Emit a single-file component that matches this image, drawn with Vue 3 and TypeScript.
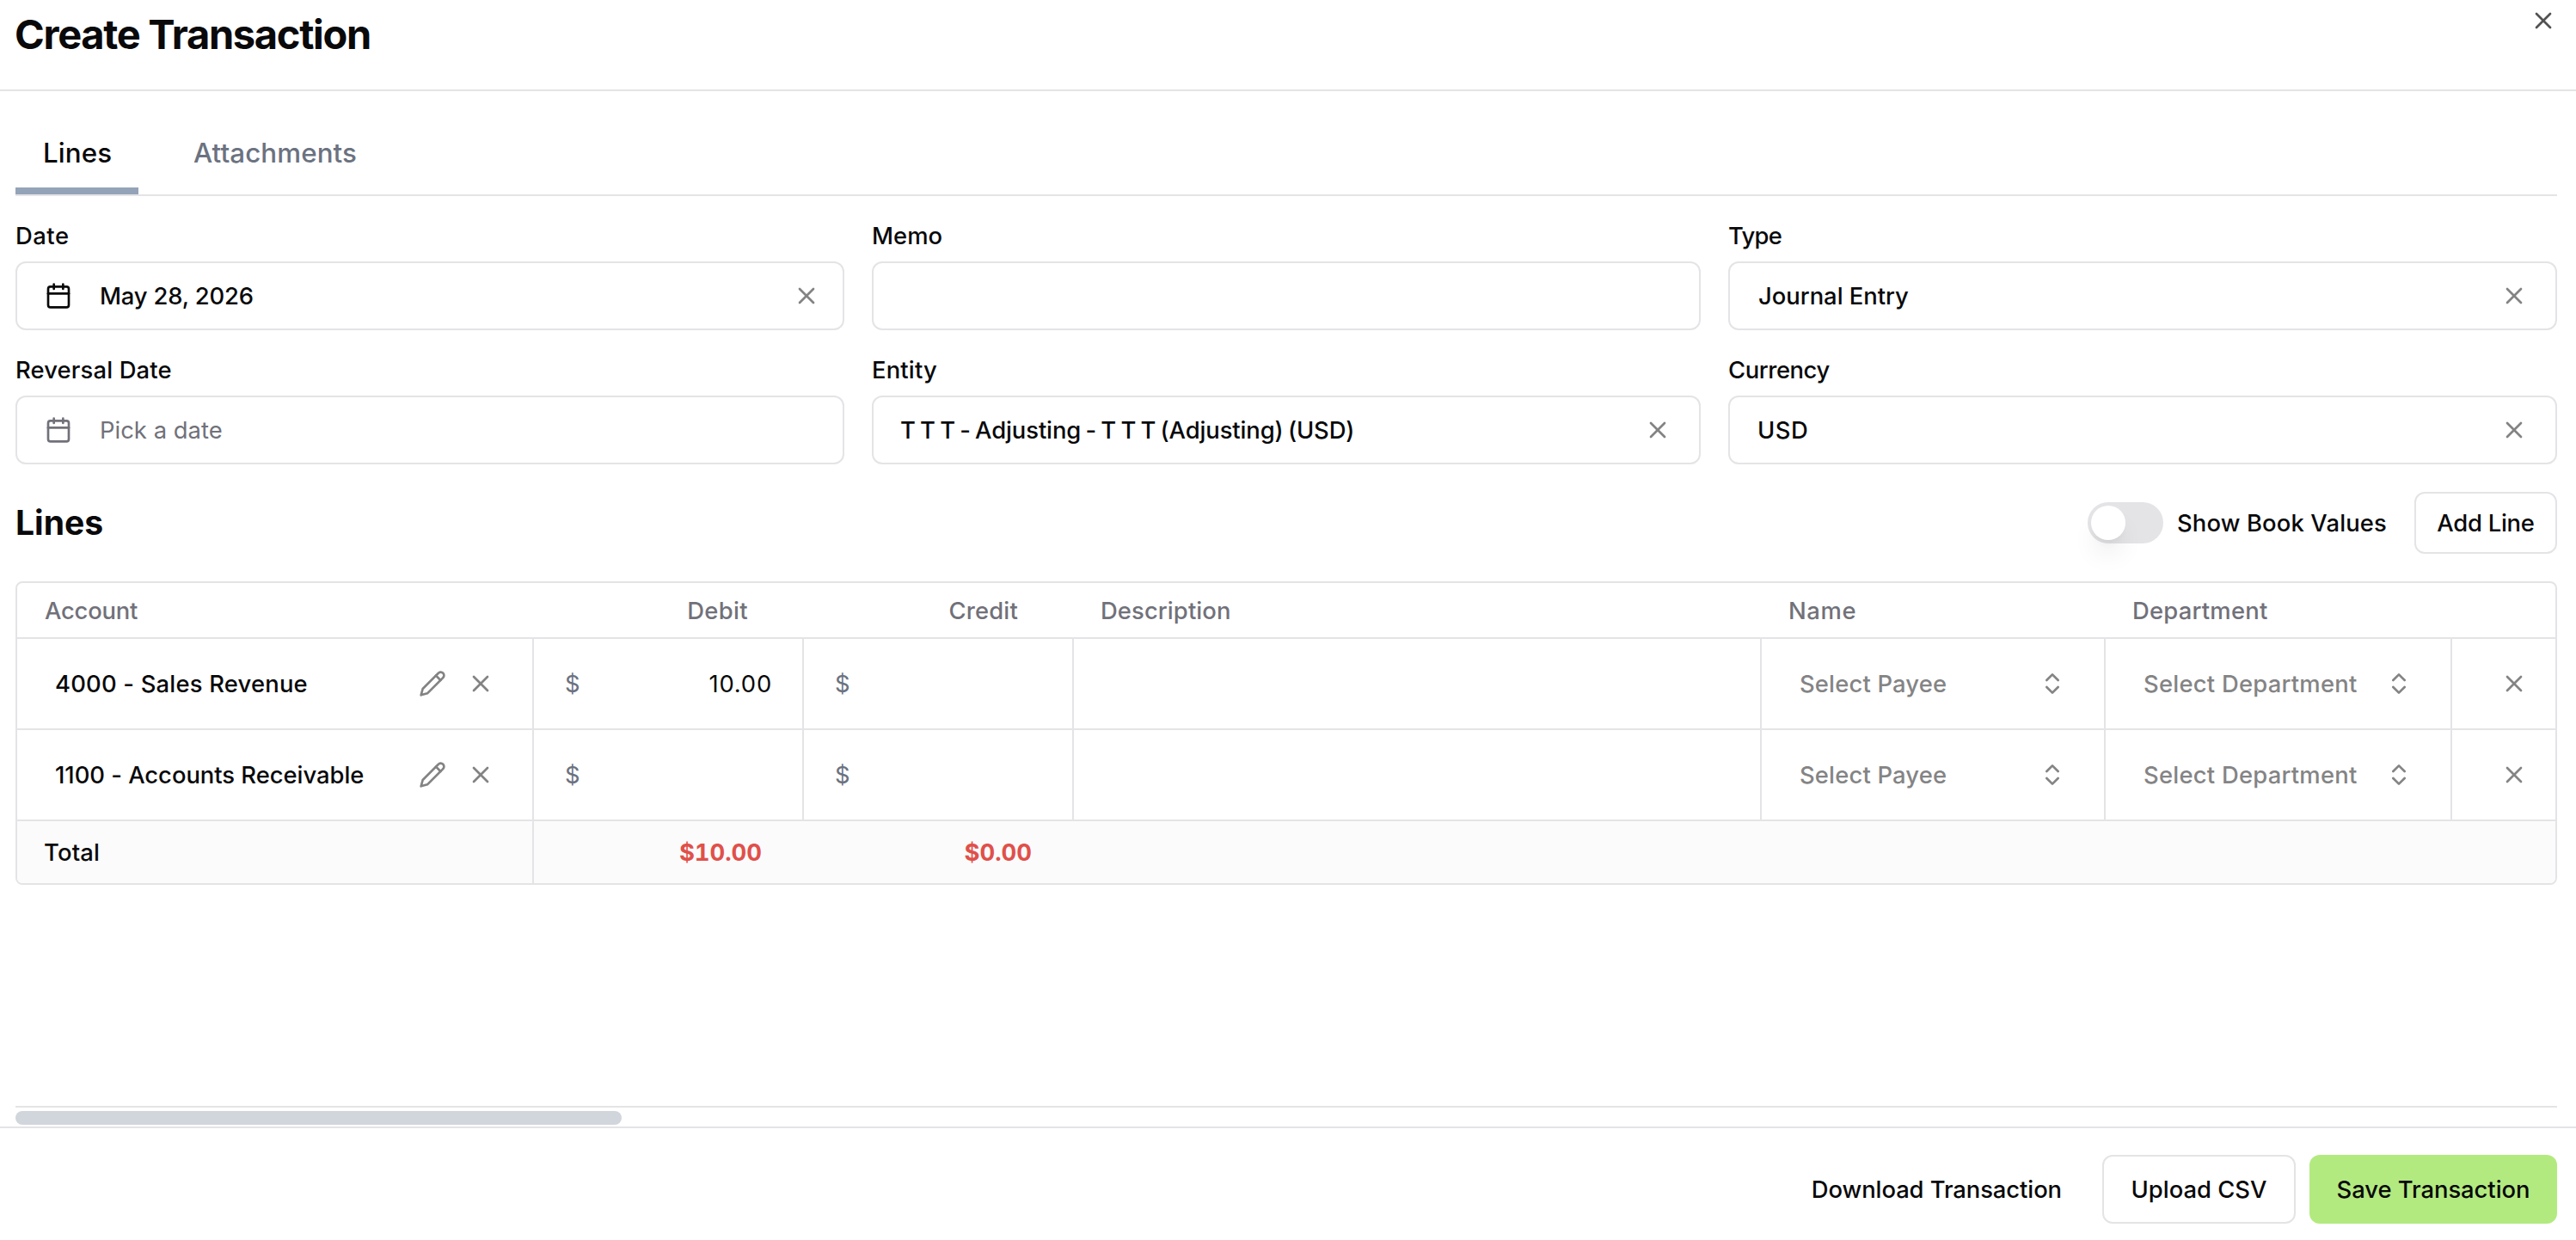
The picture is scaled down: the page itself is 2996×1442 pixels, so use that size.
<script setup lang="ts">
type IconName = 'x' | 'calendar' | 'pencil' | 'chevrons'

interface Field {
  label: string
  labelSpacing: number
  value: string
  spacing: number
  wordSpacing?: number
  placeholder?: boolean
  kind: 'date' | 'text' | 'combo'
  inset?: number
}

interface Line {
  account: string
  spacing: number
  debit: string
  credit: string
}

const icons: Record<IconName, string[]> = {
  x: ['M18 6 6 18', 'm6 6 12 12'],
  calendar: ['M8 2v4', 'M16 2v4', 'M5 4h14a2 2 0 0 1 2 2v14a2 2 0 0 1-2 2H5a2 2 0 0 1-2-2V6a2 2 0 0 1 2-2Z', 'M3 10h18'],
  pencil: ['M17 3a2.85 2.83 0 1 1 4 4L7.5 20.5 2 22l1.5-5.5Z', 'm15 5 4 4'],
  chevrons: ['m7 15 5 5 5-5', 'm7 9 5-5 5 5'],
}

const fields: Field[] = [
  { label: 'Date', labelSpacing: 0.5, value: 'May 28, 2026', spacing: -0.16, kind: 'date' },
  { label: 'Memo', labelSpacing: 0.06, value: '', spacing: 0, kind: 'text' },
  { label: 'Type', labelSpacing: -0.7, value: 'Journal Entry', spacing: -0.02, kind: 'combo', inset: 33 },
  { label: 'Reversal Date', labelSpacing: 0.15, value: 'Pick a date', spacing: 0.03, placeholder: true, kind: 'date' },
  { label: 'Entity', labelSpacing: 0.18, value: 'T T T - Adjusting - T T T (Adjusting) (USD)', spacing: -0.1, wordSpacing: -1.9, kind: 'combo', inset: 31 },
  { label: 'Currency', labelSpacing: -0.42, value: 'USD', spacing: 0.5, kind: 'combo', inset: 32 },
]

const columns = [
  { title: 'Account', spacing: -0.2, numeric: false },
  { title: 'Debit', spacing: 0.35, numeric: true },
  { title: 'Credit', spacing: 0.2, numeric: true },
  { title: 'Description', spacing: 0.1, numeric: false },
  { title: 'Name', spacing: 0.6, numeric: false },
  { title: 'Department', spacing: 0.23, numeric: false },
  { title: '', spacing: 0, numeric: false },
]

const lines: Line[] = [
  { account: '4000 - Sales Revenue', spacing: 0.2, debit: '10.00', credit: '' },
  { account: '1100 - Accounts Receivable', spacing: -0.03, debit: '', credit: '' },
]

const ls = (letter: number, word = 0) => ({ letterSpacing: `${letter}px`, wordSpacing: `${word}px` })
</script>

<template>
  <div class="dialog">
    <header class="head">
      <h1>Create Transaction</h1>
      <svg class="icon close" viewBox="0 0 24 24"><path v-for="d in icons.x" :key="d" :d="d" /></svg>
    </header>

    <main class="body">
      <nav class="tabs">
        <span class="tab active">Lines</span>
        <span class="tab">Attachments</span>
      </nav>

      <section class="form">
        <div v-for="f in fields" :key="f.label" class="field">
          <label :style="ls(f.labelSpacing)">{{ f.label }}</label>
          <div class="control" :class="[f.kind, { placeholder: f.placeholder }]">
            <svg v-if="f.kind === 'date'" class="icon" viewBox="0 0 24 24">
              <path v-for="d in icons.calendar" :key="d" :d="d" />
            </svg>
            <span class="value" :style="{ ...ls(f.spacing, f.wordSpacing), marginLeft: `${f.inset ?? 0}px` }">{{ f.value }}</span>
            <svg v-if="f.value && !f.placeholder" class="icon dim" viewBox="0 0 24 24">
              <path v-for="d in icons.x" :key="d" :d="d" />
            </svg>
          </div>
        </div>
      </section>

      <section class="bar">
        <h2>Lines</h2>
        <span class="switch"><span class="knob"></span></span>
        <span class="switch-label">Show Book Values</span>
        <button class="btn add">Add Line</button>
      </section>

      <section class="table">
        <div class="row header">
          <div v-for="(c, i) in columns" :key="i" class="cell" :class="{ num: c.numeric, first: i === 0 }">
            <span :style="ls(c.spacing)">{{ c.title }}</span>
          </div>
        </div>
        <div v-for="l in lines" :key="l.account" class="row line">
          <div class="cell account">
            <span class="name" :style="ls(l.spacing)">{{ l.account }}</span>
            <svg class="icon dim" viewBox="0 0 24 24"><path v-for="d in icons.pencil" :key="d" :d="d" /></svg>
            <svg class="icon dim" viewBox="0 0 24 24"><path v-for="d in icons.x" :key="d" :d="d" /></svg>
          </div>
          <div class="cell money"><span class="sign">$</span><span class="amount">{{ l.debit }}</span></div>
          <div class="cell money"><span class="sign">$</span><span class="amount">{{ l.credit }}</span></div>
          <div class="cell"></div>
          <div class="cell select">
            <span class="payee">Select Payee</span>
            <svg class="icon" viewBox="0 0 24 24"><path v-for="d in icons.chevrons" :key="d" :d="d" /></svg>
          </div>
          <div class="cell select">
            <span class="dept">Select Department</span>
            <svg class="icon" viewBox="0 0 24 24"><path v-for="d in icons.chevrons" :key="d" :d="d" /></svg>
          </div>
          <div class="cell remove">
            <svg class="icon" viewBox="0 0 24 24"><path v-for="d in icons.x" :key="d" :d="d" /></svg>
          </div>
        </div>
        <div class="row total">
          <div class="cell label">Total</div>
          <div class="cell sum">$10.00</div>
          <div class="cell sum">$0.00</div>
        </div>
      </section>

      <div class="scroller"><div class="thumb"></div></div>
    </main>

    <footer class="foot">
      <span class="download">Download Transaction</span>
      <button class="btn upload">Upload CSV</button>
      <button class="btn save">Save Transaction</button>
    </footer>
  </div>
</template>

<style>
body {
  background: #fff;
}
</style>

<style scoped>
.dialog,
.dialog * {
  box-sizing: border-box;
}
.dialog {
  width: 2996px;
  height: 1442px;
  overflow: hidden;
  display: flex;
  flex-direction: column;
  background: #fff;
  color: #09090b;
  font-family: Inter, 'Liberation Sans', sans-serif;
  font-size: 27.4px;
  font-weight: 500;
  line-height: 40px;
  white-space: nowrap;
}
.icon {
  width: 32px;
  height: 32px;
  flex: none;
  display: block;
  fill: none;
  stroke: currentColor;
  stroke-width: 2;
  stroke-linecap: round;
  stroke-linejoin: round;
}
.dim {
  opacity: 0.5;
}
.head {
  flex: none;
  height: 106px;
  display: flex;
  justify-content: space-between;
  align-items: flex-start;
  padding: 8px 22px 0 17px;
  border-bottom: 2px solid #e4e4e7;
}
h1 {
  margin: 0;
  font-size: 47px;
  font-weight: 650;
  line-height: 64px;
  letter-spacing: -1.3px;
}
.close {
  opacity: 0.7;
}
.body {
  flex: 1;
  min-height: 0;
  display: flex;
  flex-direction: column;
  padding: 0 22px 0 18px;
}
.tabs {
  flex: none;
  height: 122px;
  display: flex;
  align-items: flex-end;
  gap: 32px;
  border-bottom: 2px solid #e4e4e7;
  font-size: 31.3px;
}
.tab {
  height: 89px;
  padding: 1px 31px 0 32px;
  border-bottom: 8px solid transparent;
  line-height: 81px;
  letter-spacing: 0.09px;
  color: #6b7280;
}
.tab.active {
  width: 143px;
  padding: 1px 0 0 32px;
  border-bottom-color: #94a3b8;
  letter-spacing: 0.1px;
  color: #09090b;
}
.form {
  display: grid;
  grid-template-columns: repeat(3, 1fr);
  gap: 26px 32px;
  margin-top: 26px;
}
.field {
  display: flex;
  flex-direction: column;
  gap: 10px;
}
label {
  height: 40px;
}
.control {
  height: 80px;
  display: flex;
  align-items: center;
  border: 2px solid #e4e4e7;
  border-radius: 12px;
}
.control.date {
  padding: 0 26px 0 32px;
  gap: 32px;
}
.control.combo {
  padding-right: 32px;
}
.value {
  flex: 1;
}
.placeholder {
  color: #71717a;
  font-weight: 400;
}
.bar {
  display: flex;
  align-items: center;
  height: 72px;
  margin-top: 32px;
}
h2 {
  flex: 1;
  margin: 0;
  font-size: 39.1px;
  font-weight: 650;
  letter-spacing: 0;
}
.switch {
  width: 88px;
  height: 48px;
  padding: 4px;
  border-radius: 24px;
  background: #e4e4e7;
}
.knob {
  display: block;
  width: 40px;
  height: 40px;
  border-radius: 50%;
  background: #fff;
  box-shadow: 0 20px 30px -6px rgba(0, 0, 0, 0.1), 0 8px 12px -8px rgba(0, 0, 0, 0.1);
}
.switch-label {
  width: 244px;
  margin: 0 32px 0 16px;
  letter-spacing: 0.14px;
}
.btn {
  display: flex;
  align-items: center;
  justify-content: center;
  padding: 0;
  border: 2px solid #e4e4e7;
  border-radius: 12px;
  background: #fff;
  color: #09090b;
  font: inherit;
}
.add {
  width: 166px;
  height: 72px;
  letter-spacing: -0.25px;
}
.table {
  margin-top: 32px;
  border: 2px solid #e4e4e7;
  border-radius: 8px;
  overflow: hidden;
}
.row {
  display: grid;
  grid-template-columns: 601px 314px 314px 800px 400px 403px 1fr;
}
.cell {
  display: flex;
  align-items: center;
  min-width: 0;
}
.header {
  height: 65px;
  border-bottom: 2px solid #e4e4e7;
  color: #71717a;
}
.header .cell {
  padding-left: 31px;
}
.header .first {
  padding-left: 32px;
}
.header .num {
  justify-content: flex-end;
  padding: 0 65px 0 0;
}
.line {
  height: 106px;
  border-bottom: 2px solid #e4e4e7;
}
.line .cell {
  border-right: 2px solid #e4e4e7;
}
.line .cell:last-child {
  border-right: 0;
}
.account {
  padding: 0 44px 0 44px;
  gap: 24px;
}
.name {
  flex: 1;
}
.money {
  justify-content: space-between;
  padding: 0 35px 0 36px;
  font-weight: 400;
}
.sign {
  color: #6b7280;
}
.amount {
  letter-spacing: 0.8px;
}
.select {
  justify-content: space-between;
  padding: 0 44px;
  color: #848485;
}
.payee {
  letter-spacing: 0.17px;
}
.dept {
  letter-spacing: 0.24px;
}
.remove {
  padding-left: 56px;
  color: #848485;
}
.total {
  height: 72px;
  background: #fbfbfb;
}
.total .label {
  padding-left: 31px;
  border-right: 2px solid #e4e4e7;
  letter-spacing: 0.2px;
}
.sum {
  justify-content: flex-end;
  padding-right: 49px;
  color: #e0504a;
  font-weight: 700;
  font-variant-numeric: tabular-nums;
  letter-spacing: 0;
}
.scroller {
  flex: none;
  height: 24px;
  margin-top: auto;
  padding-top: 4px;
  border-top: 2px solid #e4e4e7;
}
.thumb {
  width: 705px;
  height: 16px;
  border-radius: 8px;
  background: #d1d5dc;
}
.foot {
  flex: none;
  height: 132px;
  display: flex;
  justify-content: flex-end;
  gap: 16px;
  padding: 31px 22px 0 0;
  border-top: 2px solid #e4e4e7;
}
.download {
  line-height: 80px;
  margin-right: 31px;
  letter-spacing: -0.08px;
}
.upload {
  width: 225px;
  height: 80px;
}
.save {
  width: 288px;
  height: 80px;
  border: 0;
  background: #b3ea80;
  letter-spacing: -0.05px;
}
</style>
